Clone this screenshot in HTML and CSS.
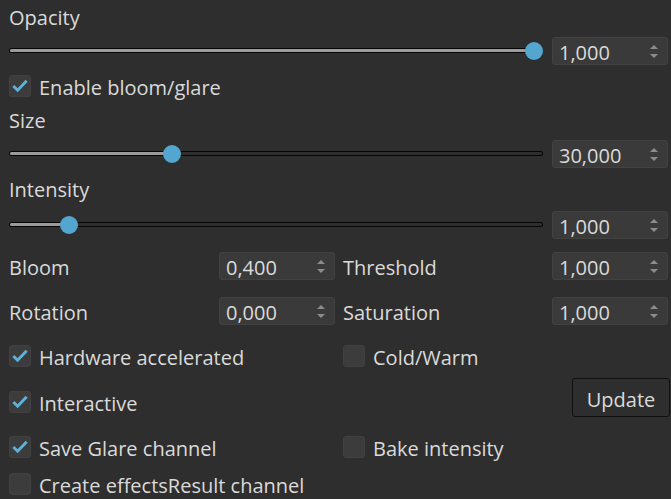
FILE: index.html
```html
<!DOCTYPE html>
<html>
<head>
<meta charset="utf-8">
<link rel="stylesheet" href="styles.css">
</head>
<body>
<div class="panel">
  <div class="label r-opacity">Opacity</div>
  <div class="slider-row r-s1">
    <div class="slider">
      <div class="track"><div class="fill" style="width: 525px"></div></div>
      <div class="knob" style="left: 516px"></div>
    </div>
    <div class="spin"><span class="val">1,000</span><span class="arrows"><i class="up"></i><i class="down"></i></span></div>
  </div>
  <div class="check-row r-enable">
    <span class="cb on"><svg viewBox="0 0 21 21"><polyline points="3.5,10.5 8,15 17.5,5"/></svg></span>
    <span class="text">Enable bloom/glare</span>
  </div>
  <div class="label r-size">Size</div>
  <div class="slider-row r-s2">
    <div class="slider">
      <div class="track"><div class="fill" style="width: 163px"></div></div>
      <div class="knob" style="left: 154px"></div>
    </div>
    <div class="spin"><span class="val">30,000</span><span class="arrows"><i class="up"></i><i class="down"></i></span></div>
  </div>
  <div class="label r-int">Intensity</div>
  <div class="slider-row r-s3">
    <div class="slider">
      <div class="track"><div class="fill" style="width: 60px"></div></div>
      <div class="knob" style="left: 51px"></div>
    </div>
    <div class="spin"><span class="val">1,000</span><span class="arrows"><i class="up"></i><i class="down"></i></span></div>
  </div>
  <div class="grid4 r-bloom">
    <span class="text">Bloom</span>
    <div class="spin"><span class="val">0,400</span><span class="arrows"><i class="up"></i><i class="down"></i></span></div>
    <span class="text col3">Threshold</span>
    <div class="spin"><span class="val">1,000</span><span class="arrows"><i class="up"></i><i class="down"></i></span></div>
  </div>
  <div class="grid4 r-rot">
    <span class="text">Rotation</span>
    <div class="spin"><span class="val">0,000</span><span class="arrows"><i class="up"></i><i class="down"></i></span></div>
    <span class="text col3">Saturation</span>
    <div class="spin"><span class="val">1,000</span><span class="arrows"><i class="up"></i><i class="down"></i></span></div>
  </div>
  <div class="grid2 r-hw">
    <div class="check-row">
      <span class="cb on"><svg viewBox="0 0 21 21"><polyline points="3.5,10.5 8,15 17.5,5"/></svg></span>
      <span class="text">Hardware accelerated</span>
    </div>
    <div class="check-row">
      <span class="cb"></span>
      <span class="text">Cold/Warm</span>
    </div>
  </div>
  <div class="action-row r-inter">
    <div class="check-row inter">
      <span class="cb on"><svg viewBox="0 0 21 21"><polyline points="3.5,10.5 8,15 17.5,5"/></svg></span>
      <span class="text">Interactive</span>
    </div>
    <button class="btn">Update</button>
  </div>
  <div class="grid2 r-save">
    <div class="check-row">
      <span class="cb on"><svg viewBox="0 0 21 21"><polyline points="3.5,10.5 8,15 17.5,5"/></svg></span>
      <span class="text">Save Glare channel</span>
    </div>
    <div class="check-row">
      <span class="cb"></span>
      <span class="text">Bake intensity</span>
    </div>
  </div>
  <div class="check-row r-create">
    <span class="cb"></span>
    <span class="text">Create effectsResult channel</span>
  </div>
</div>
</body>
</html>
```

FILE: styles.css
```css
html, body {
  margin: 0;
  padding: 0;
  background: #2e2e2e;
  width: 671px;
  height: 499px;
  overflow: hidden;
}
body {
  font-family: "Open Sans", "Noto Sans", sans-serif;
  font-size: 20px;
  color: #dadada;
}
.panel {
  display: flex;
  flex-direction: column;
  padding: 0 3px 0 9px;
}
.label {
  height: 30px;
  line-height: 30px;
  white-space: nowrap;
}
.text {
  white-space: nowrap;
  line-height: 22px;
  margin-top: 3px;
}

.r-opacity { height: 36px; line-height: 36px; }
.r-s1 { margin-top: 1px; }
.r-enable { margin-top: 10px; }
.r-size { margin-top: 9px; }
.r-s2 { margin-top: 4px; }
.r-int { margin-top: 7px; }
.r-s3 { margin-top: 6px; }
.r-bloom { margin-top: 13px; }
.r-rot { margin-top: 17px; }
.r-hw { margin-top: 20px; }
.r-inter { margin-top: 11px; }
.r-save { margin-top: 19px; }
.r-create { margin-top: 15px; }

.slider-row {
  display: flex;
  align-items: center;
  gap: 9px;
  height: 28px;
}
.slider {
  flex: 1;
  position: relative;
  height: 28px;
}
.track {
  position: absolute;
  left: 0;
  right: 0;
  top: 11px;
  height: 3px;
  border: 1px solid #050505;
  border-radius: 3px / 2px;
  border-top-left-radius: 4px 2px;
  border-bottom-left-radius: 4px 2px;
}
.fill {
  height: 100%;
  background: #9b9b9b;
  border-radius: 2px 0 0 2px;
}
.knob {
  position: absolute;
  top: 5px;
  width: 18px;
  height: 18px;
  border-radius: 50%;
  background: #52a6cf;
}

.spin {
  box-sizing: border-box;
  width: 116px;
  height: 28px;
  background: #3a3a3a;
  border: 1px solid #424242;
  border-radius: 3px;
  display: flex;
  align-items: center;
  justify-content: space-between;
  padding: 0 9px 0 6px;
  flex: none;
}
.val {
  white-space: nowrap;
  line-height: 26px;
  margin-top: 3px;
}
.arrows {
  display: flex;
  flex-direction: column;
  gap: 5px;
}
.arrows i {
  display: block;
  width: 0;
  height: 0;
  border-left: 4px solid transparent;
  border-right: 4px solid transparent;
}
.arrows .up { border-bottom: 4px solid #8c8c8c; }
.arrows .down { border-top: 4px solid #8c8c8c; }

.check-row {
  display: flex;
  align-items: center;
  gap: 8px;
  height: 22px;
}
.cb {
  box-sizing: border-box;
  width: 22px;
  height: 22px;
  background: #3c3c3c;
  border: 1px solid #414141;
  border-radius: 3px;
  flex: none;
  display: flex;
}
.cb svg {
  width: 20px;
  height: 20px;
}
.cb polyline {
  fill: none;
  stroke: #5db2db;
  stroke-width: 3;
}

.grid4 {
  display: grid;
  grid-template-columns: 210px 115px 218px 116px;
  align-items: center;
  height: 28px;
}
.grid4 .col3 { padding-left: 9px; }
.grid2 {
  display: grid;
  grid-template-columns: 334px 1fr;
  height: 22px;
}
.action-row {
  display: flex;
  justify-content: space-between;
  height: 39px;
}
.inter { margin-top: 13px; }
.btn {
  box-sizing: border-box;
  width: 98px;
  height: 39px;
  margin-right: -2px;
  background: #2e2e2e;
  border: 1px solid #101010;
  border-radius: 3px;
  color: #dadada;
  font-family: inherit;
  font-size: 20px;
  padding: 3px 0 0;
}
```
